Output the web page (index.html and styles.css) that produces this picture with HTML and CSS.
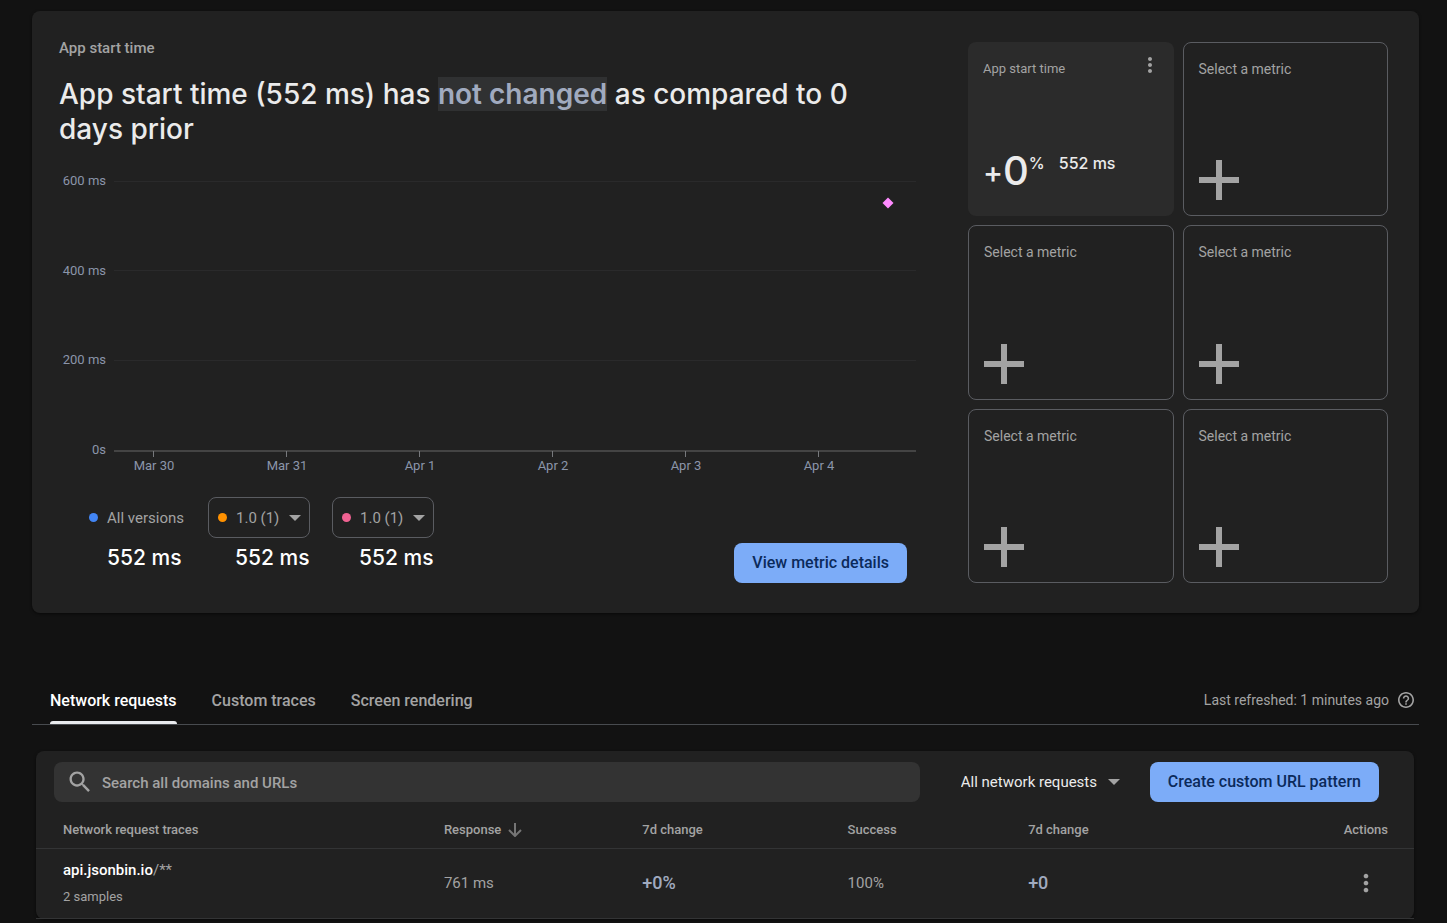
FILE: index.html
```html
<!DOCTYPE html>
<html lang="en">
<head>
<meta charset="utf-8">
<meta name="viewport" content="width=device-width, initial-scale=1">
<title>Performance dashboard</title>
<link rel="stylesheet" href="styles.css">
</head>
<body>
<svg class="sprite" aria-hidden="true">
  <symbol id="plus" viewBox="0 0 40 40"><path d="M17 0h6v17h17v6H23v17h-6V23H0v-6h17z"/></symbol>
  <symbol id="more" viewBox="0 0 24 24"><path d="M12 8c1.1 0 2-.9 2-2s-.9-2-2-2-2 .9-2 2 .9 2 2 2zm0 2c-1.1 0-2 .9-2 2s.9 2 2 2 2-.9 2-2-.9-2-2-2zm0 6c-1.1 0-2 .9-2 2s.9 2 2 2 2-.9 2-2-.9-2-2-2z"/></symbol>
  <symbol id="caret" viewBox="0 0 12 6"><path d="M0 0h12L6 6z"/></symbol>
</svg>
<main class="page">
  <section class="overview">
    <div class="trend">
      <h2 class="trend-label">App start time</h2>
      <p class="headline">App start time (552 ms) has <mark class="headline-mark">not changed</mark> as compared to 0 days prior</p>
      <svg class="chart" viewBox="0 0 858 312" role="img" aria-label="App start time by day">
        <g class="chart-grid">
          <path d="M55 16.5H857M55 105.5H857M55 195.5H857"/>
        </g>
        <path class="chart-axis" d="M55 286H857"/>
        <path class="chart-tick" d="M94.5 286v6M227.5 286v6M360.5 286v6M493.5 286v6M626.5 286v6M759.5 286v6"/>
        <g class="chart-text chart-text-y">
          <text x="47" y="20">600 ms</text>
          <text x="47" y="110">400 ms</text>
          <text x="47" y="199">200 ms</text>
          <text x="47" y="289">0s</text>
        </g>
        <g class="chart-text chart-text-x">
          <text x="95" y="305">Mar 30</text>
          <text x="228" y="305">Mar 31</text>
          <text x="361" y="305">Apr 1</text>
          <text x="494" y="305">Apr 2</text>
          <text x="627" y="305">Apr 3</text>
          <text x="760" y="305">Apr 4</text>
        </g>
        <path class="chart-point" d="M829 32.500l5.500 5.500-5.500 5.500-5.500-5.500z"/>
      </svg>
      <div class="trend-footer">
        <div class="legend">
          <div class="legend-item">
            <div class="version version-all"><span class="dot dot-blue"></span>All versions</div>
            <strong class="legend-value">552 ms</strong>
          </div>
          <div class="legend-item">
            <label class="version version-picker"><span class="dot dot-orange"></span>
              <select class="version-select" aria-label="First version"><option>1.0 (1)</option></select>
              <svg class="caret"><use href="#caret"/></svg></label>
            <strong class="legend-value">552 ms</strong>
          </div>
          <div class="legend-item">
            <label class="version version-picker"><span class="dot dot-pink"></span>
              <select class="version-select" aria-label="Second version"><option>1.0 (1)</option></select>
              <svg class="caret"><use href="#caret"/></svg></label>
            <strong class="legend-value">552 ms</strong>
          </div>
        </div>
        <button class="button" type="button">View metric details</button>
      </div>
    </div>
    <div class="metrics">
      <article class="tile tile-active">
        <header class="tile-header"><h3 class="tile-title">App start time</h3>
          <button class="icon-button tile-menu" type="button" aria-label="Metric options"><svg class="icon-more"><use href="#more"/></svg></button></header>
        <div class="result"><span class="result-sign">+</span><span class="result-number">0</span><span class="result-unit">%</span><span class="result-value">552 ms</span></div>
      </article>
      <button class="tile" type="button"><span>Select a metric</span><svg class="plus"><use href="#plus"/></svg></button>
      <button class="tile" type="button"><span>Select a metric</span><svg class="plus"><use href="#plus"/></svg></button>
      <button class="tile" type="button"><span>Select a metric</span><svg class="plus"><use href="#plus"/></svg></button>
      <button class="tile" type="button"><span>Select a metric</span><svg class="plus"><use href="#plus"/></svg></button>
      <button class="tile" type="button"><span>Select a metric</span><svg class="plus"><use href="#plus"/></svg></button>
    </div>
  </section>

  <nav class="tabs">
    <a class="tab tab-current" href="#network" aria-current="page">Network requests</a>
    <a class="tab" href="#traces">Custom traces</a>
    <a class="tab" href="#rendering">Screen rendering</a>
    <div class="refreshed">Last refreshed: 1 minutes ago
      <svg class="icon-help" viewBox="2 2 20 20"><path d="M11 18h2v-2h-2v2zm1-16C6.480 2 2 6.480 2 12s4.480 10 10 10 10-4.480 10-10S17.520 2 12 2zm0 18c-4.410 0-8-3.590-8-8s3.590-8 8-8 8 3.590 8 8-3.590 8-8 8zm0-14c-2.210 0-4 1.790-4 4h2c0-1.100.9-2 2-2s2 .9 2 2c0 2-3 1.750-3 5h2c0-2.250 3-2.500 3-5 0-2.210-1.790-4-4-4z"/></svg>
    </div>
  </nav>

  <section class="requests" id="network">
    <div class="toolbar">
      <label class="search">
        <svg class="icon-search" viewBox="0 0 24 24"><path d="M15.500 14h-.79l-.28-.27C15.410 12.590 16 11.110 16 9.500 16 5.910 13.090 3 9.500 3S3 5.910 3 9.500 5.910 16 9.500 16c1.610 0 3.090-.59 4.230-1.570l.27.28v.79l5 4.990L20.490 19l-4.990-5zm-6 0C7.010 14 5 11.990 5 9.500S7.010 5 9.500 5 14 7.010 14 9.500 11.990 14 9.500 14z"/></svg>
        <input class="search-input" type="search" placeholder="Search all domains and URLs" aria-label="Search all domains and URLs">
      </label>
      <label class="filter">
        <select class="filter-select" aria-label="Request filter"><option>All network requests</option></select>
        <svg class="caret"><use href="#caret"/></svg>
      </label>
      <button class="button" type="button">Create custom URL pattern</button>
    </div>
    <table class="table">
      <colgroup><col class="col-name"><col class="col-response"><col class="col-change"><col class="col-success"><col class="col-rest"><col class="col-actions"></colgroup>
      <thead>
        <tr>
          <th>Network request traces</th>
          <th><span class="sorted">Response <svg class="icon-sort" viewBox="0 0 14 14"><path d="M7 0v13M1 7l6 6 6-6"/></svg></span></th>
          <th>7d change</th>
          <th>Success</th>
          <th>7d change</th>
          <th class="actions">Actions</th>
        </tr>
      </thead>
      <tbody>
        <tr>
          <td><a class="trace" href="#trace"><b class="trace-domain">api.jsonbin.io</b>/**</a><span class="samples">2 samples</span></td>
          <td>761 ms</td>
          <td class="delta">+0%</td>
          <td>100%</td>
          <td class="delta">+0</td>
          <td class="actions"><button class="icon-button row-menu" type="button" aria-label="Trace actions"><svg class="icon-more icon-more-large"><use href="#more"/></svg></button></td>
        </tr>
      </tbody>
    </table>
  </section>
</main>
</body>
</html>
```
FILE: styles.css
```css
:root {
  --page: #121212;
  --card: #212121;
  --line: #5a5c61;
  --muted: #a3a3a3;
  --bright: #ebebeb;
  --slate: #a0aabf;
  --blue: #7cacf8;
  --display: "Google Sans", Inter, Roboto, sans-serif;
}
* { box-sizing: border-box; }
body {
  margin: 0;
  background: var(--page);
  color: var(--muted);
  font: 15px/20px Roboto, sans-serif;
}
button, input, select { font: inherit; color: inherit; }
button { cursor: pointer; }
svg { display: block; fill: currentColor; flex: none; }
.sprite { position: absolute; width: 0; height: 0; }
.page { padding: 11px 28px 4px 32px; }

.overview {
  display: grid;
  grid-template-columns: minmax(0, 1fr) 420px;
  gap: 51px;
  padding: 31px 31px 30px 27px;
  background: var(--card);
  border-radius: 8px;
  box-shadow: 0 1px 3px #0008;
}
.trend { display: flex; flex-direction: column; }
.trend-label {
  margin: -4px 0 0;
  font-size: 15px;
  line-height: 20px;
  font-weight: 500;
}
.headline {
  margin: 19px 0 0;
  padding-right: 40px;
  color: var(--bright);
  font: 500 28px/35px var(--display);
}
.headline-mark { background: #303132; color: var(--slate); font-weight: 600; }
.chart { width: 100%; height: auto; margin-top: 18px; overflow: visible; }
.chart-grid { stroke: #2a2a2b; }
.chart-axis { stroke: #444; stroke-width: 2; }
.chart-tick { stroke: #77797d; }
.chart-text { fill: #8b95aa; font-size: 13px; }
.chart-text-y { text-anchor: end; }
.chart-text-x { text-anchor: middle; }
.chart-point { fill: #ff8bff; }

.trend-footer {
  display: flex;
  justify-content: space-between;
  align-items: flex-end;
  margin-top: auto;
  padding-right: 10px;
}
.legend { display: flex; gap: 22px; padding: 0 0 12px 30px; }
.legend-item { display: flex; flex-direction: column; min-width: 97px; }
.version { display: flex; align-items: center; height: 41px; }
.version-all { gap: 9px; }
.version-picker {
  width: 102px;
  padding: 0 8px 0 9px;
  gap: 9px;
  border: 1px solid var(--line);
  border-radius: 8px;
}
.version-select, .filter-select {
  appearance: none;
  padding: 0;
  border: 0;
  background: transparent;
}
.dot { flex: none; width: 9px; height: 9px; border-radius: 50%; }
.dot-blue { background: #4285f4; }
.dot-orange { background: #ff9100; }
.dot-pink { background: #f06292; }
.caret { width: 12px; height: 6px; pointer-events: none; }
.legend-value {
  padding: 7px 0 0 18px;
  color: #fff;
  font: 500 21px/26px var(--display);
}
.legend-item + .legend-item .legend-value { padding-left: 27px; }
.button {
  height: 40px;
  padding: 0 18px;
  border: 0;
  border-radius: 8px;
  background: var(--blue);
  color: #0b2a5b;
  font-size: 16px;
  font-weight: 500;
}

.metrics {
  display: grid;
  grid-template-columns: 1fr 1fr;
  grid-auto-rows: 1fr;
  gap: 9px;
  min-height: 541px;
}
.tile {
  display: flex;
  flex-direction: column;
  align-items: flex-start;
  justify-content: space-between;
  padding: 16px 15px 15px;
  border: 1px solid var(--line);
  border-radius: 8px;
  background: none;
  font-size: 14px;
  text-align: left;
}
.tile-active { padding-left: 14px; border-color: transparent; background: #2b2b2b; }
.tile-header { display: flex; justify-content: space-between; align-self: stretch; height: 20px; }
.tile-title { margin: 0; font-size: 13px; line-height: 20px; font-weight: 400; }
.plus { width: 40px; height: 40px; }
.icon-button { display: flex; padding: 0; border: 0; background: none; }
.tile-menu { align-self: flex-start; margin: -6px -4px 0 0; }
.icon-more { width: 24px; height: 24px; }
.icon-more-large { width: 28px; height: 28px; }
.result { display: flex; color: var(--bright); font: 500 16px/20px var(--display); padding-bottom: 9px; }
.result-sign { font-size: 30px; line-height: 38px; }
.result-number { font-size: 40px; line-height: 36px; }
.result-value { margin-left: 14px; }

.tabs {
  display: flex;
  gap: 35px;
  height: 49px;
  margin-top: 63px;
  padding: 0 5px 0 18px;
  border-bottom: 1px solid #484b4f;
}
.tab {
  height: 48px;
  color: var(--muted);
  font-size: 16px;
  line-height: 50px;
  font-weight: 500;
  text-decoration: none;
  position: relative;
}
.tab-current { color: #fff; }
.tab-current::after {
  content: "";
  position: absolute;
  inset: auto 0 0;
  height: 3px;
  border-radius: 3px 3px 0 0;
  background: #e8eaed;
}
.refreshed { display: flex; align-items: center; gap: 9px; margin-left: auto; font-size: 14px; }
.icon-help { width: 16px; height: 16px; }

.requests {
  margin: 26px 5px 0 4px;
  background: var(--card);
  border-radius: 8px;
  box-shadow: 0 1px 3px #0008;
}
.toolbar { display: flex; align-items: center; padding: 11px 35px 11px 18px; }
.search {
  display: flex;
  flex: 1;
  align-items: center;
  gap: 8px;
  height: 40px;
  padding: 0 12px;
  border-radius: 8px;
  background: #333;
}
.icon-search { width: 28px; height: 28px; }
.search-input {
  flex: 1;
  min-width: 0;
  padding: 2px 0 0;
  border: 0;
  outline: 0;
  background: none;
  font-weight: 500;
}
.search-input::placeholder { color: var(--muted); opacity: 1; }
.filter { display: flex; align-items: center; gap: 10px; margin: 0 30px 0 41px; }
.filter-select { color: var(--bright); }

.table { width: 100%; border-collapse: collapse; table-layout: fixed; text-align: left; }
.col-name { width: 29.6%; }
.col-response { width: 14.4%; }
.col-change { width: 14.9%; }
.col-success { width: 13.1%; }
.col-actions { width: 10%; }
.table tr { border-bottom: 1px solid #333435; }
.table th { height: 35px; padding: 0; font-size: 13px; font-weight: 500; }
.table td { height: 70px; padding: 0; }
.table th:first-child, .table td:first-child { padding-left: 27px; }
.table .actions { padding-right: 26px; text-align: right; }
.sorted { display: flex; align-items: center; gap: 7px; }
.icon-sort { width: 14px; height: 14px; fill: none; stroke: #757575; stroke-width: 2; }
.trace { display: block; color: var(--muted); text-decoration: none; }
.trace-domain { color: #fff; font-weight: 500; }
.samples { display: block; margin-top: 7px; font-size: 13px; }
.table .delta { color: var(--slate); font-size: 18px; font-weight: 500; }
.row-menu { margin: 0 8px 0 auto; }

@media (max-width: 1100px) {
  .overview { grid-template-columns: 1fr; }
}
```
